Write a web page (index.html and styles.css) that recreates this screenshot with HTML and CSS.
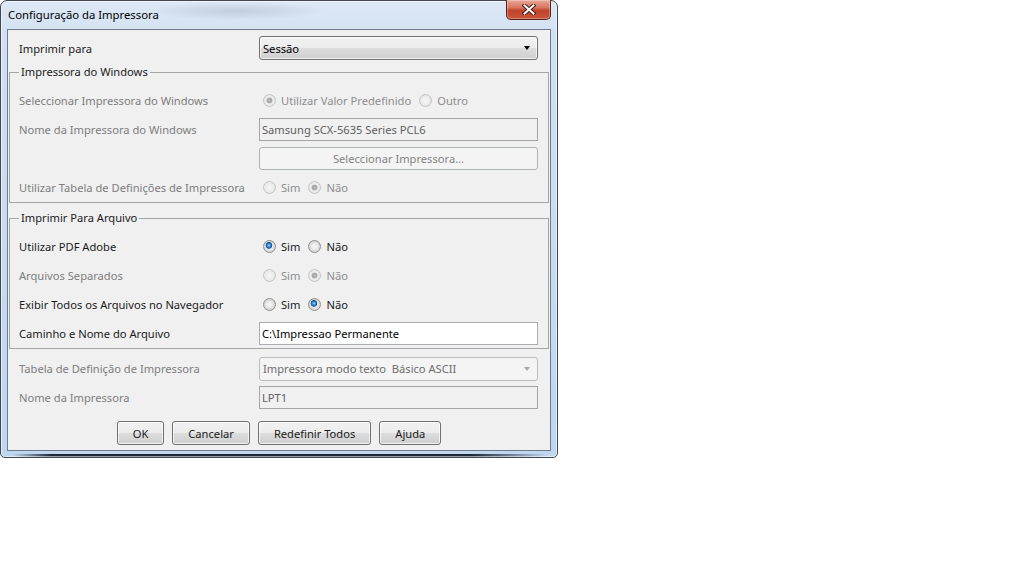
FILE: index.html
```html
<!DOCTYPE html>
<html>

<head>
    <meta charset="UTF-8">
    <title>Configuração da Impressora</title>

    <link rel="stylesheet" href="styles.css">
</head>

<body>
<div class="window">
    <div class="titlebar">
        <span class="title">Configuração da Impressora</span>
        <button class="close-button" title="Fechar">
            <svg width="14" height="11" viewBox="0 0 14 11">
                <path d="M2.5 1.5 L11.5 9.5 M11.5 1.5 L2.5 9.5" stroke="#4a1b16" stroke-width="4" stroke-linecap="square"/>
                <path d="M2.5 1.5 L11.5 9.5 M11.5 1.5 L2.5 9.5" stroke="#fff" stroke-width="2" stroke-linecap="square"/>
            </svg>
        </button>
    </div>

    <div class="client">
        <div class="form-grid top-row">
            <label>Imprimir para</label>
            <div class="combo">Sessão<span class="arrow"></span></div>
        </div>

        <fieldset class="group">
            <legend>Impressora do Windows</legend>
            <div class="form-grid">
                <label class="disabled">Seleccionar Impressora do Windows</label>
                <div class="radio-group">
                    <label class="option disabled"><input type="radio" name="win-printer" checked disabled>Utilizar Valor Predefinido</label>
                    <label class="option disabled"><input type="radio" name="win-printer" disabled>Outro</label>
                </div>

                <label class="disabled">Nome da Impressora do Windows</label>
                <div class="field disabled">Samsung SCX-5635 Series PCL6</div>

                <span></span>
                <button class="push-button" disabled>Seleccionar Impressora...</button>

                <label class="disabled">Utilizar Tabela de Definições de Impressora</label>
                <div class="radio-group">
                    <label class="option disabled"><input type="radio" name="win-table" disabled>Sim</label>
                    <label class="option disabled"><input type="radio" name="win-table" checked disabled>Não</label>
                </div>
            </div>
        </fieldset>

        <fieldset class="group second">
            <legend>Imprimir Para Arquivo</legend>
            <div class="form-grid">
                <label>Utilizar PDF Adobe</label>
                <div class="radio-group">
                    <label class="option"><input type="radio" name="pdf" checked>Sim</label>
                    <label class="option"><input type="radio" name="pdf">Não</label>
                </div>

                <label class="disabled">Arquivos Separados</label>
                <div class="radio-group">
                    <label class="option disabled"><input type="radio" name="separate" disabled>Sim</label>
                    <label class="option disabled"><input type="radio" name="separate" checked disabled>Não</label>
                </div>

                <label>Exibir Todos os Arquivos no Navegador</label>
                <div class="radio-group">
                    <label class="option"><input type="radio" name="browser">Sim</label>
                    <label class="option"><input type="radio" name="browser" checked>Não</label>
                </div>

                <label>Caminho e Nome do Arquivo</label>
                <div class="field">C:\Impressao Permanente</div>
            </div>
        </fieldset>

        <div class="form-grid after-group">
            <label class="disabled">Tabela de Definição de Impressora</label>
            <div class="combo disabled">Impressora modo texto&nbsp; Básico ASCII<span class="arrow"></span></div>

            <label class="disabled">Nome da Impressora</label>
            <div class="field disabled">LPT1</div>
        </div>

        <div class="button-bar">
            <button class="push-button">OK</button>
            <button class="push-button">Cancelar</button>
            <button class="push-button">Redefinir Todos</button>
            <button class="push-button">Ajuda</button>
        </div>
    </div>
</div>
</body>

</html>
```

FILE: styles.css
```css
body {
    margin: 0;
    background: #fff;
    font-family: "Noto Sans", "Liberation Sans", sans-serif;
    font-size: 11.15px;
    color: #1a1a1a;
}

/* window frame (aero glass) */
.window {
    width: 558px;
    height: 458px;
    box-sizing: border-box;
    display: flex;
    flex-direction: column;

    border: 1px solid #3f4853;
    border-radius: 7px 7px 5px 5px;
    box-shadow: inset 0 0 0 1px rgba(255, 255, 255, 0.55);
    background:
        linear-gradient(90deg, transparent 12px, #1e2836 50px, #1e2836 470px, rgba(30, 40, 54, 0.3) 525px, transparent 545px) left bottom / 100% 3px no-repeat,
        radial-gradient(ellipse 90px 9px at 235px 10px, rgba(150, 160, 175, 0.35), transparent),
        linear-gradient(#dde8f5, #d0e0f2 40px, #bfd6ef);
}

.titlebar {
    height: 28px;
    display: flex;
    align-items: flex-start;
}

.title {
    padding: 6px 0 0 7px;
    line-height: 16px;
    font-size: 11.3px;
    color: #000;
}

.close-button {
    margin: -1px 6px 0 auto;
    width: 45px;
    height: 20px;
    padding: 0;
    display: flex;
    align-items: center;
    justify-content: center;

    border: 1px solid #5b2219;
    border-top: none;
    border-radius: 0 0 5px 5px;
    box-shadow: inset 0 0 0 1px rgba(255, 255, 255, 0.3);
    background: linear-gradient(#e8a797 0, #d8755f 40%, #c1432b 55%, #ca553c 100%);
}

/* client area */
.client {
    flex: 1;
    margin: 0 6px 6px;
    padding-top: 6px;
    border: 1px solid #6d7c8d;
    background: #f0f0f0;
}

.form-grid {
    display: grid;
    grid-template-columns: 240px 279px;
    grid-auto-rows: 23px;
    row-gap: 6px;
    align-items: center;
}

.client > .form-grid {
    padding-left: 11px;
}

.top-row {
    grid-auto-rows: 24px;
}

.after-group {
    margin-top: 8px;
}

label.disabled {
    color: #7d7d7d;
}

.group {
    margin: 4px 1px 0;
    padding: 9px 9px 3px;
    border: 1px solid #a5a5a5;
    min-width: 0;
}

.group.second {
    margin-top: 7px;
}

.group legend {
    padding: 0 2px;
    line-height: 16px;
    color: #1a1a1a;
}

/* controls */
.combo {
    height: 24px;
    box-sizing: border-box;
    display: flex;
    align-items: center;
    justify-content: space-between;
    padding: 0 7px 0 3px;

    border: 1px solid #707070;
    border-radius: 3px;
    box-shadow: inset 0 0 0 1px rgba(255, 255, 255, 0.7);
    background: linear-gradient(#f2f2f2 0, #ebebeb 50%, #dddddd 50%, #cfcfcf 100%);
    color: #000;
}

.combo .arrow {
    width: 0;
    height: 0;
    border-left: 3.5px solid transparent;
    border-right: 3.5px solid transparent;
    border-top: 4px solid #000;
}

.combo.disabled {
    border-color: #bcbcbc;
    box-shadow: none;
    background: #f4f4f4;
    color: #6d6d6d;
}

.combo.disabled .arrow {
    border-top-color: #a8a8a8;
}

.field {
    height: 23px;
    box-sizing: border-box;
    display: flex;
    align-items: center;
    padding-left: 2px;

    border: 1px solid #abadb3;
    background: #fff;
    color: #000;
}

.field.disabled {
    border-color: #a5a5a5;
    background: #f0f0f0;
    color: #5f5f5f;
}

.push-button {
    height: 23px;
    padding: 0 15px;
    min-width: 47px;

    font: inherit;
    color: #1a1a1a;
    border: 1px solid #707070;
    border-radius: 3px;
    box-shadow: inset 0 0 0 1px rgba(255, 255, 255, 0.7);
    background: linear-gradient(#f2f2f2 0, #ebebeb 50%, #dddddd 50%, #cfcfcf 100%);
}

.push-button:disabled {
    border-color: #adb2b5;
    box-shadow: none;
    background: #f4f4f4;
    color: #838383;
}

.button-bar {
    display: flex;
    justify-content: center;
    gap: 8px;
    margin-top: 12px;
}

.button-bar .push-button {
    height: 24px;
}

/* radio buttons, win7 look */
.radio-group {
    display: flex;
    gap: 8px;
    padding-left: 4px;
}

.option {
    display: flex;
    align-items: center;
    gap: 5px;
}

.option.disabled {
    color: #8d8d8d;
}

input[type="radio"] {
    appearance: none;
    margin: 0;
    width: 13px;
    height: 13px;
    box-sizing: border-box;
    border-radius: 50%;
    border: 1px solid #8f8f8f;
    background: radial-gradient(circle, #f7f7f7 0, #e9e9e9 3px, #d4d4d4 5.5px);
}

input[type="radio"]:checked {
    background:
        radial-gradient(circle at 45% 40%, #a8dafc 0, #3b8fd8 1.5px, #124f96 3px, transparent 3.6px),
        radial-gradient(circle, #f7f7f7 0, #e9e9e9 3px, #d4d4d4 5.5px);
}

input[type="radio"]:disabled {
    border-color: #c4c4c4;
    background: radial-gradient(circle, #f7f7f7 0, #efefef 3px, #e6e6e6 5.5px);
}

input[type="radio"]:disabled:checked {
    background:
        radial-gradient(circle, #c0c0c0 0, #a2a2a2 2.5px, transparent 3.3px),
        radial-gradient(circle, #f7f7f7 0, #efefef 3px, #e6e6e6 5.5px);
}
```
